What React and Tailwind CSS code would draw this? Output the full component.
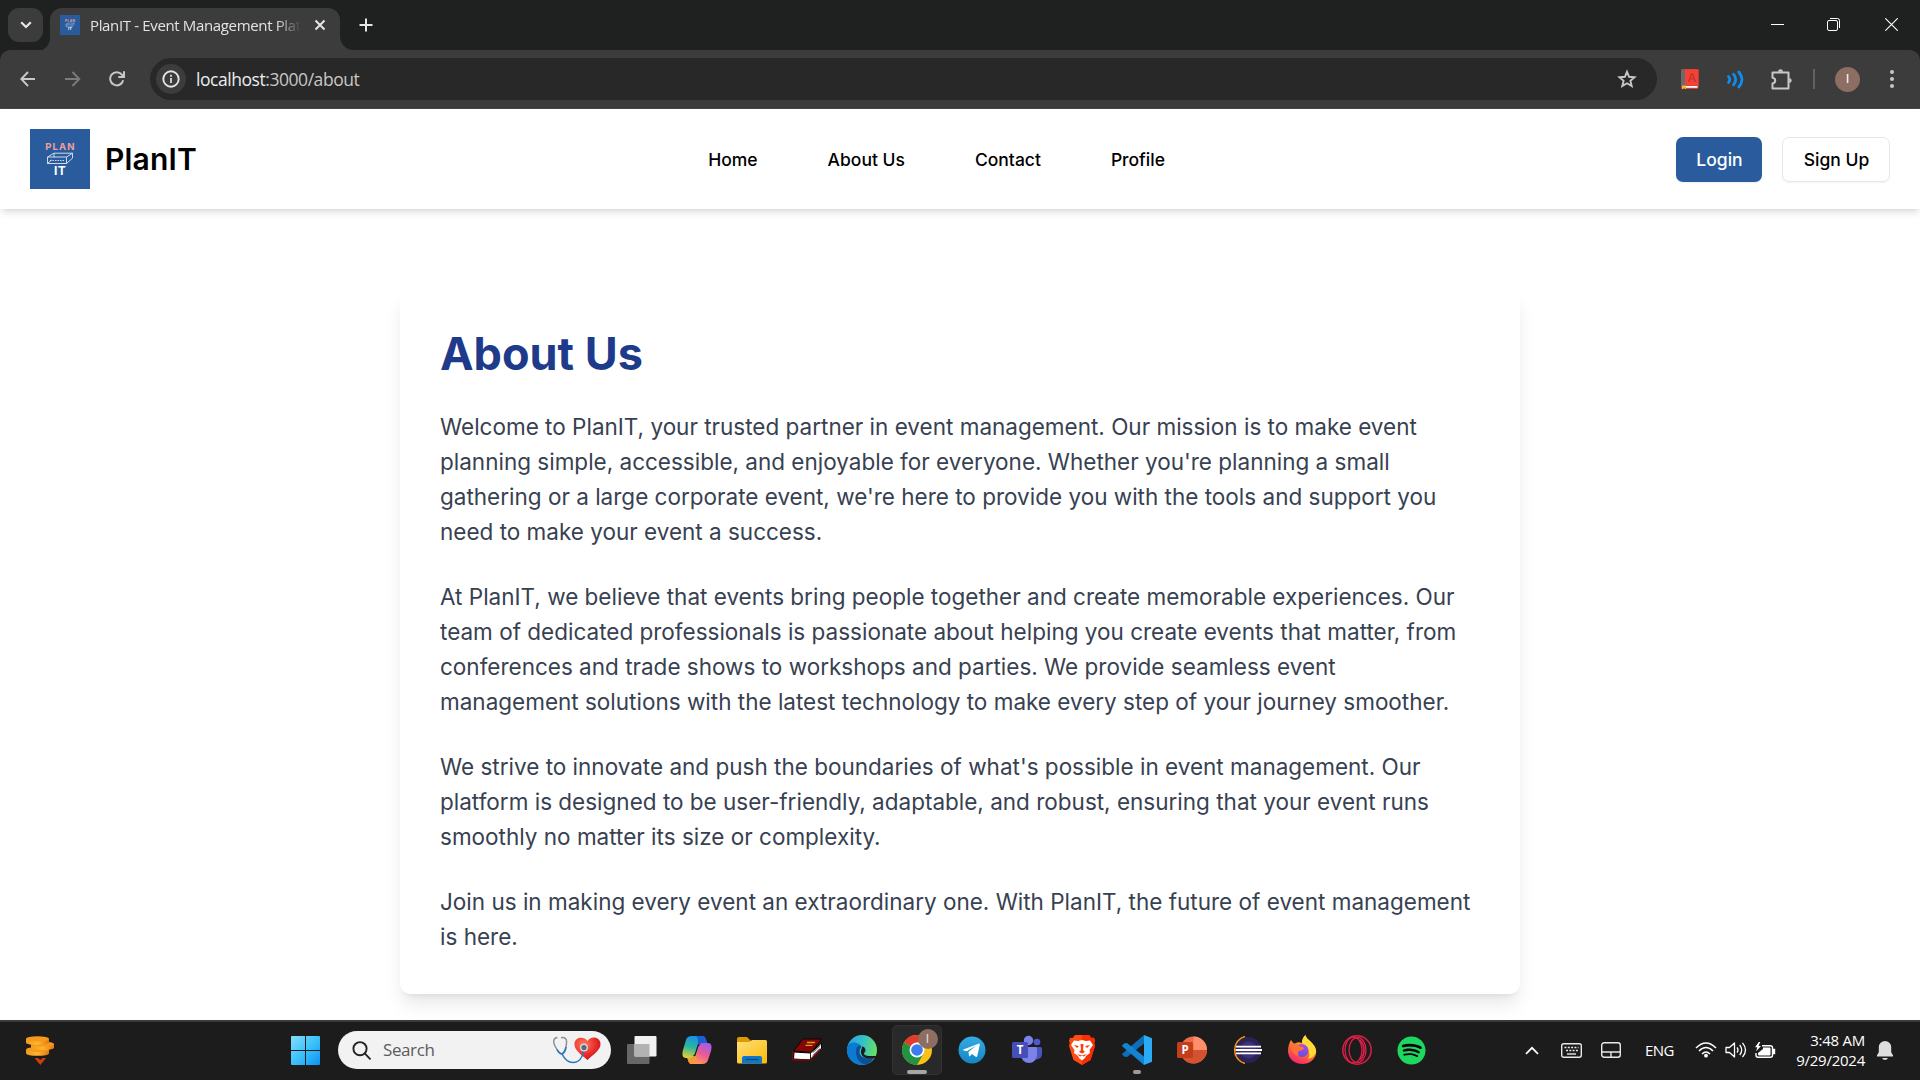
import React from "react";
import { FaSpotify } from "react-icons/fa";

const paragraphs = [
  [
    "Welcome to PlanIT, your trusted partner in event management. Our mission is to make event",
    "planning simple, accessible, and enjoyable for everyone. Whether you're planning a small",
    "gathering or a large corporate event, we're here to provide you with the tools and support you",
    "need to make your event a success.",
  ],
  [
    "At PlanIT, we believe that events bring people together and create memorable experiences. Our",
    "team of dedicated professionals is passionate about helping you create events that matter, from",
    "conferences and trade shows to workshops and parties. We provide seamless event",
    "management solutions with the latest technology to make every step of your journey smoother.",
  ],
  [
    "We strive to innovate and push the boundaries of what's possible in event management. Our",
    "platform is designed to be user-friendly, adaptable, and robust, ensuring that your event runs",
    "smoothly no matter its size or complexity.",
  ],
  [
    "Join us in making every event an extraordinary one. With PlanIT, the future of event management",
    "is here.",
  ],
];

/* The PlanIT mark: word, wireframe beam, word, on a blue square */
function PlanLogo({ className }) {
  return (
    <svg viewBox="0 0 60 60" className={className}>
      <rect width="60" height="60" fill="#2a5c9d" />
      <text x="30.4" y="21.4" textAnchor="middle" fontFamily="Inter, sans-serif" fontWeight="700" fontSize="9.5" letterSpacing="1.1" fill="#f0a09c">PLAN</text>
      <g fill="none" stroke="#dfe8f5" strokeWidth="0.9" strokeLinejoin="round">
        <path d="M17.500 28h19v6.500h-19zM17.500 28l6.500-3.800h18.500l-6 3.800M42.500 24.200v5l-6 5.300M24 24.200v4M17.500 34.500l4-3.500" />
        <path d="M20 31.500h14" strokeDasharray="1.500 1" />
      </g>
      <text x="30.200" y="45.600" textAnchor="middle" fontFamily="Inter, sans-serif" fontWeight="700" fontSize="12" letterSpacing="0.600" fill="#ffffff">IT</text>
    </svg>
  );
}

function TabStrip() {
  return (
    <div className="flex h-[50px] bg-[#1f2120] text-[#e3e3e3]">
      <div className="flex h-[50px] w-[43px] shrink-0 pl-2 pt-2">
        <div className="flex h-[34px] w-[35px] items-center justify-center rounded-[11px] bg-[#3c3c3c]">
          <svg viewBox="0 0 12 8" className="h-[8px] w-[12px]" fill="none" stroke="#e6e6e6" strokeWidth="2.200">
            <path d="M1.200 1.200L6 6l4.800-4.800" />
          </svg>
        </div>
      </div>
      <svg viewBox="0 0 7 12" className="h-[12px] w-[7px] shrink-0 self-end" fill="#3c3c3c" preserveAspectRatio="none">
        <path d="M7 0Q6 12-5 12H7z" />
      </svg>
      <div className="mt-[8px] flex h-[42px] w-[290px] shrink-0 items-center rounded-t-[12px] bg-[#3c3c3c] pb-[8px]">
        <PlanLogo className="ml-[10px] h-[20px] w-[20px] shrink-0" />
        <div className="ml-[10px] w-[211px] whitespace-nowrap [mask-image:linear-gradient(to_right,black_88%,transparent_100%)]">
          <span className="font-['Open_Sans',sans-serif] text-[15px] leading-[20px] tracking-[-0.35px]">PlanIT - Event Management Plat</span>
        </div>
        <svg viewBox="0 0 12 12" className="ml-[13px] h-[12px] w-[12px]" fill="none" stroke="#e6e6e6" strokeWidth="2">
          <path d="M1.500 1.500l9 9M10.500 1.500l-9 9" />
        </svg>
      </div>
      <svg viewBox="0 0 14 14" className="h-[14px] w-[14px] shrink-0 self-end" fill="#3c3c3c">
        <path d="M0 0v14h14C6 14 0 8 0 0z" />
      </svg>
      <svg viewBox="0 0 14 14" className="ml-[5px] mt-[18px] h-[14px] w-[14px]" fill="none" stroke="#e6e6e6" strokeWidth="2">
        <path d="M7 0.500v13M0.500 7h13" />
      </svg>
      <div className="flex-1" />
      <div className="mr-[22px] flex items-start gap-[43px] pt-[18px]">
        <svg viewBox="0 0 13 13" className="h-[13px] w-[13px]" stroke="#ffffff" strokeWidth="1">
          <path d="M0 6.500h13" />
        </svg>
        <svg viewBox="0 0 13 13" className="mr-[2px] h-[13px] w-[13px]" fill="none" stroke="#ffffff" strokeWidth="1">
          <rect x="0.500" y="2.500" width="10" height="10" rx="1.500" />
          <path d="M3 0.500h7.500a2 2 0 012 2V10" />
        </svg>
        <svg viewBox="0 0 13 13" className="h-[13px] w-[13px]" fill="none" stroke="#ffffff" strokeWidth="1.100">
          <path d="M0.300 0.300l12.400 12.400M12.700 0.300L0.300 12.700" />
        </svg>
      </div>
    </div>
  );
}

function AddressBar() {
  return (
    <div className="bg-[#1f2120]">
      <div className="flex h-[59px] items-center rounded-t-[10px] border-b border-[#474747] bg-[#3c3c3c]">
        <svg viewBox="0 0 16 16" className="ml-[20px] h-[16px] w-[16px]" fill="none" stroke="#c7c7c7" strokeWidth="1.900">
          <path d="M15 8H1.500M8 1L1.300 8 8 15" />
        </svg>
        <svg viewBox="0 0 16 16" className="ml-[29px] h-[16px] w-[16px]" fill="none" stroke="#7b7b7b" strokeWidth="1.900">
          <path d="M0 8h13.500M7.500 1l6.800 7-6.800 7" />
        </svg>
        <svg viewBox="0 0 16 16" className="ml-[28px] mr-[1px] h-[16px] w-[16px]" fill="none" stroke="#c7c7c7" strokeWidth="2">
          <path d="M14.200 9.300A6.600 6.600 0 1 1 12.900 3.600L14.500 5.500M15 0.300V6H9.300" />
        </svg>
        <div className="ml-[24px] flex h-[42px] w-[1507px] items-center rounded-full bg-[#282828]">
          <div className="ml-[6px] flex h-[30px] w-[30px] items-center justify-center rounded-full bg-[#3c3c3c]">
            <svg viewBox="0 0 18 18" className="h-[18px] w-[18px]" fill="none" stroke="#e3e3e3" strokeWidth="1.900">
              <circle cx="9" cy="9" r="7.700" />
              <path d="M9 8v5M9 4.800v2" strokeWidth="1.700" />
            </svg>
          </div>
          <span className="ml-[10px] whitespace-nowrap font-['Open_Sans',sans-serif] text-[17.5px] leading-[24px] tracking-[-0.45px] text-[#c7c7c7]">
            <span className="text-[#ededed]">localhost</span>:3000/about
          </span>
          <svg viewBox="0 0 20 20" className="ml-auto mr-[20px] h-[20px] w-[20px]" fill="none" stroke="#c7c7c7" strokeWidth="1.900">
            <path d="M10 2.800l2.100 5 5.400.5-4.100 3.500 1.300 5.300L10 14.300l-4.700 2.800 1.300-5.300L2.500 8.300l5.400-.5z" />
          </svg>
        </div>
        <svg viewBox="0 0 18 21" className="ml-[24px] h-[21px] w-[18px] shrink-0">
          <rect x="0" y="0" width="17.500" height="20" rx="1.500" fill="#d93a31" />
          <rect x="4" y="0.500" width="13.500" height="16" fill="#f44336" />
          <rect x="0" y="0.500" width="4" height="17" rx="1" fill="#6b6b6b" />
          <text x="10.800" y="12.600" textAnchor="middle" fontFamily="Liberation Sans, sans-serif" fontWeight="700" fontSize="12" fill="#c9332b">A</text>
          <rect x="3.500" y="17" width="13" height="1.800" fill="#fafafa" />
          <path d="M1 16.500h4v4l-2-1.500-2 1.500z" fill="#f0b93a" />
        </svg>
        <svg viewBox="0 0 17 19" className="ml-[28px] h-[19px] w-[17px] shrink-0" fill="none" stroke="#0d8ff2" strokeWidth="2.700" strokeLinecap="round">
          <path d="M1.500 6.500q2.500 3 0 6M6.500 4.200q4.400 5.300 0 10.600M11.800 2q6.400 7.500 0 15" />
        </svg>
        <svg viewBox="0 0 21 21" className="ml-[27px] h-[21px] w-[21px] shrink-0" fill="none" stroke="#c7c7c7" strokeWidth="2" strokeLinejoin="round">
          <path d="M1.500 3.500H17.500v16H1.500v-5c3.600-.5 3.600-5.300 0-5.800z" />
          <path d="M7 2.800a2.500 2.500 0 0 1 5 0zM18.200 9a2.500 2.500 0 0 1 0 5z" fill="#c7c7c7" stroke="none" />
        </svg>
        <div className="ml-[21px] h-[20px] w-[2px] bg-[#626262]" />
        <div className="ml-[20px] flex h-[25px] w-[25px] items-center justify-center rounded-full bg-[#8d6e63] font-['Liberation_Sans',sans-serif] text-[13px] text-white">I</div>
        <div className="ml-[30px] flex flex-col gap-[3px]">
          <div className="h-[4px] w-[4px] rounded-full bg-[#c7c7c7]" />
          <div className="h-[4px] w-[4px] rounded-full bg-[#c7c7c7]" />
          <div className="h-[4px] w-[4px] rounded-full bg-[#c7c7c7]" />
        </div>
      </div>
    </div>
  );
}

function SiteHeader() {
  return (
    <header className="flex h-[100px] shrink-0 items-center justify-between bg-white px-[30px] text-black shadow-[0_5px_7.5px_-1.25px_rgba(0,0,0,0.1),0_2.5px_5px_-2.5px_rgba(0,0,0,0.1)]">
      <div className="flex items-center gap-[15px]">
        <PlanLogo className="h-[60px] w-[60px]" />
        <span className="text-[30px] font-semibold leading-[40px] tracking-[0.2px]">PlanIT</span>
      </div>
      <nav className="flex items-center gap-[70px] text-[17.5px] font-medium leading-[25px]">
        <a>Home</a>
        <a>About Us</a>
        <a>Contact</a>
        <a>Profile</a>
      </nav>
      <div className="flex items-center gap-[20px] text-[17.5px] font-medium leading-[25px]">
        <button className="h-[45px] w-[86px] rounded-[7px] bg-[#2a5c9d] pl-px text-white shadow-[0_1px_2px_rgba(0,0,0,0.08)]">Login</button>
        <button className="h-[45px] w-[108px] rounded-[7px] border border-[#e2e8f0] bg-white pl-px shadow-[0_1px_2px_rgba(0,0,0,0.05)]">Sign Up</button>
      </div>
    </header>
  );
}

function AboutCard() {
  return (
    <main className="flex-1 pt-[80px]">
      <article className="mx-auto w-[1120px] rounded-[10px] bg-white p-[40px] shadow-[0_12.5px_18.75px_-3.75px_rgba(0,0,0,0.1),0_5px_7.5px_-5px_rgba(0,0,0,0.1)]">
        <h1 className="mb-[30px] text-[45px] font-bold leading-[50px] text-[#1e3a8a]">About Us</h1>
        <div className="flex flex-col gap-[30px] text-[22.5px] leading-[35px] text-[#374151]">
          {paragraphs.map((lines) => (
            <p key={lines[0]}>
              {lines.map((line) => (
                <span key={line} className="block whitespace-nowrap">{line}</span>
              ))}
            </p>
          ))}
        </div>
      </article>
    </main>
  );
}

const appIcons = {
  taskView: (
    <>
      <rect x="0" y="9" width="22.500" height="20" rx="1" fill="#676767" />
      <rect x="7.500" y="1" width="22" height="20.500" rx="1" fill="#f1f1f1" />
      <rect x="7.500" y="9" width="15" height="12.500" fill="#b2b2b2" />
    </>
  ),
  copilot: (
    <>
      <path d="M10 1h10c3 0 3.300 2 4 4l1 3h-4c-3 0-4 1-5 4l-2.500 8c-.7 2-1.500 3-4 3H4c-4 0-4-4-3-8l3-10c.8-2.500 2.500-4 6-4z" fill="url(#cpA)" />
      <path d="M20 29H10c-3 0-3.300-2-4-4l-.8-2h4.300c2.500 0 3.500-1 4-3l2.500-8c.7-2 1.500-4 4-4H26c4 0 4 4 3 8l-3 9c-.8 2.500-2.500 4-6 4z" fill="url(#cpB)" />
      <path d="M14 1h6c3 0 3.300 2 4 4l1 3h-4c-3 0-4 1-5 4l-.5 1.500C16 8 17 3 14 1z" fill="#1b5fd0" />
      <path d="M6.300 25.500L5.500 23h4c2.500 0 3.500-1 4-3l1.200-3.500C14 21 14.500 27 12 29h-2c-2.500 0-3-1.500-3.700-3.500z" fill="#f79a3c" />
      <path d="M15.800 9.500h3c-1.500.5-2.300 1.500-2.800 3l-2.700 8.500h-2.800c1.300-.5 2-1.500 2.500-3z" fill="#1c1c1c" />
    </>
  ),
  explorer: (
    <>
      <path d="M0 4a2 2 0 0 1 2-2h8l4 4v4H0z" fill="#dc9a00" />
      <path d="M0 7h12l3-2h13.500A1.500 1.500 0 0 1 30 6.500V27a1.500 1.500 0 0 1-1.500 1.500h-27A1.500 1.500 0 0 1 0 27z" fill="url(#fold)" />
      <path d="M5 28.500V23a2 2 0 0 1 2-2h16a2 2 0 0 1 2 2v5.500z" fill="#0f76c8" />
      <path d="M8.500 24.500h13" stroke="#064b86" strokeWidth="1.300" />
    </>
  ),
  book: (
    <>
      <path d="M11 4h18.500L19 17.500 1.500 16z" fill="#840606" stroke="#000" strokeWidth="0.800" />
      <path d="M2 17l16.500 1L29.500 8v5.500L18.500 25 1.500 24z" fill="#fff" stroke="#000" />
      <path d="M1.500 16C-.5 19 0 24 1.500 25H18L29 14" fill="none" stroke="#840606" strokeWidth="1.500" />
      <path d="M18.500 18v6.500M21 17.500l7-7M21 20.500l7-7" stroke="#222" strokeWidth="1" />
      <path d="M15 7.500h8M13.500 10.300h7" stroke="#d5a21b" strokeWidth="1.300" />
    </>
  ),
  edge: (
    <>
      <circle cx="15" cy="15" r="15" fill="url(#edgeA)" />
      <path d="M0 15C0 7 7 6 12 9c3 1.800 2 3.500 1 5-2 4 1 9 7 9 4 0 6-1 7.500-2C25 27 20 30 15 30 6 30 0 23 0 15z" fill="#0b7ad1" />
      <path d="M9.500 13C7.500 21 12 29.500 19 29.500c4-1 7-4.500 8.500-8.300-3 1.800-5 2-7.500 2-6 0-9-5-7-9.200.6-1.300 1.500-2.500.5-3.500-1.500 0-3 .8-4 2.500z" fill="#0d4f93" />
      <path d="M14.500 11.500c2.500 0 4 1.700 4 3.500 0 2-1.500 2.500-1.500 3.500 0 1.500 2 2.500 5 2.500h8l-2 2c-2 .3-3.500.3-6.500.3-6 0-9-5-7-9.300.5-1 .6-1.500 0-2.500z" fill="#1c1c1c" />
    </>
  ),
  chrome: (
    <>
      <circle cx="15" cy="15" r="15" fill="#fbc116" />
      <path d="M15 15L2 7.500A15 15 0 0 1 28 7.500H15z" fill="#e33b2e" />
      <path d="M2 7.500A15 15 0 0 0 15 30l6.500-11.300L15 15z" fill="#229342" />
      <circle cx="15" cy="15" r="7.500" fill="#fff" />
      <circle cx="15" cy="15" r="5.800" fill="#3b7cf0" />
    </>
  ),
  telegram: (
    <>
      <circle cx="15" cy="15" r="13.500" fill="url(#tg)" />
      <path d="M6.300 14.600L21.500 8.700c.9-.3 1.400.2 1.200 1.200L20.300 21c-.2.900-.8 1.100-1.600.7l-3.700-2.800-2.200 2.300c-.4.300-.8.100-.8-.4l-.5-3.900 7.700-6.500-9.500 5.800-3.400-1c-.6-.2-.6-.4 0-.6z" fill="#fff" />
    </>
  ),
  teams: (
    <>
      <circle cx="25" cy="7" r="3.300" fill="#5059c9" />
      <path d="M20 12h8.500a1.500 1.500 0 0 1 1.500 1.500V19a5.500 5.500 0 0 1-10 3z" fill="#4b53bc" />
      <circle cx="16.500" cy="5.500" r="4.700" fill="#7b83eb" />
      <path d="M9 12h14.500a1.500 1.500 0 0 1 1.500 1.500V20a8 8 0 0 1-16 0z" fill="#7b83eb" />
      <rect x="0" y="7" width="16" height="16" rx="1.500" fill="#464eb8" />
      <text x="8" y="19" textAnchor="middle" fontFamily="Open Sans, sans-serif" fontWeight="700" fontSize="11.500" fill="#fff">T</text>
    </>
  ),
  brave: (
    <>
      <path d="M8 0h14l2.500 3 2.500-.3L28 6l-.8 2 .8 3-4.500 14L15 30 6.500 25 2 11l.8-3L2 6l1-3.300L5.500 3z" fill="#ff4a12" />
      <path d="M15 0h7l2.500 3 2.500-.3L28 6l-.8 2 .8 3-4.500 14L15 30z" fill="#fa2d06" />
      <path d="M7 5.500l4 .5 4-1 4 1 4-.500L26 10l-3.500 5 .5 3-4 3-1 2-3 2.500L12 23l-1-2-4-3 .5-3L4 10z" fill="#fff" />
      <path d="M7 10l5 1-2 2zM23 10l-5 1 2 2zM13.500 9h3L16 15l2 2-3 1.500L12 17l2-2zM10 19l5 1.500 5-1.500-3 2.500-2-.800-2 .8z" fill="#fb3e0c" />
    </>
  ),
  vscode: (
    <>
      <path d="M22 0v8.500L5 22 2.500 21.800.500 20a1 1 0 0 1 0-1.500z" fill="#0d6fb8" />
      <path d="M22 30v-8.500L5 8 2.500 8.200.500 10a1 1 0 0 0 0 1.500z" fill="#1284d3" />
      <path d="M22 0l8 3.200v23.600L22 30z" fill="#2aabf3" />
    </>
  ),
  powerpoint: (
    <>
      <circle cx="16.500" cy="15" r="13.500" fill="#ed6c47" />
      <path d="M16.500 1.500A13.500 13.500 0 0 1 30 15H16.500z" fill="#ff8f6b" />
      <path d="M3 15a13.500 13.500 0 0 0 27 0z" fill="#d35230" />
      <rect x="0" y="7" width="16" height="16" rx="1.500" fill="#c43e1c" />
      <text x="8" y="19" textAnchor="middle" fontFamily="Open Sans, sans-serif" fontWeight="700" fontSize="11.500" fill="#fff">P</text>
    </>
  ),
  eclipse: (
    <>
      <path d="M13 1.500A14 14 0 0 0 13 28.500" fill="none" stroke="#f7941e" strokeWidth="1.700" />
      <circle cx="16.500" cy="15" r="13" fill="#2c2255" />
      <circle cx="16.500" cy="15" r="8.500" fill="#3c3173" />
      <path d="M4 11.700h25M3.500 15h26.500M4 18.300h25" stroke="#fff" strokeWidth="1.800" />
    </>
  ),
  firefox: (
    <>
      <path d="M4 5l3 4c3-2 6-2 8-1 0-3 1-6 3.500-8 .5 3 3 4.500 5 6.500C28 11 30 14 29 19c-1.500 6-7 10-13.500 10C7 29 1 23 1 16 1 12 2 8 4 5z" fill="url(#ffA)" />
      <path d="M18.500 0c.5 3 3 4.500 5 6.500C27 10 29 13 29 17c-2 5-5 6-8 7 3-5 1-11-6-16 0-3 1-6 3.500-8z" fill="#ffdc35" />
      <circle cx="15" cy="15.500" r="6.500" fill="url(#ffB)" />
      <path d="M3 10c4-3 7-1 9 1 2 1 5 1 5 2 0 2-3 2-5 3-2 1.500-1 4 0 5-5-1-7-5-9-11z" fill="#ff7139" />
    </>
  ),
  opera: (
    <g fill="none" stroke="#d91f48">
      <circle cx="15" cy="15" r="14.200" strokeWidth="1.500" />
      <ellipse cx="11.500" cy="15" rx="8.500" ry="13" strokeWidth="1.300" />
      <ellipse cx="15.500" cy="15" rx="8.500" ry="12.500" strokeWidth="1.300" />
      <path d="M17.500 5c6 4.500 6 15.500 0 20" strokeWidth="1.800" />
    </g>
  ),
};

function AppIcon({ name }) {
  return (
    <svg viewBox="0 0 30 30" className="h-[30px] w-[30px]">{appIcons[name]}</svg>
  );
}

function GradientDefs() {
  return (
    <svg className="absolute h-0 w-0">
      <defs>
        <linearGradient id="cpA" x1="0.500" y1="0" x2="0.200" y2="1"><stop offset="0" stopColor="#1a8fe8" /><stop offset="0.500" stopColor="#28b6a0" /><stop offset="1" stopColor="#e8d130" /></linearGradient>
        <linearGradient id="cpB" x1="0.800" y1="0" x2="0.300" y2="1"><stop offset="0" stopColor="#a05cf0" /><stop offset="0.500" stopColor="#ec5a92" /><stop offset="1" stopColor="#ffa34d" /></linearGradient>
        <linearGradient id="fold" x1="0" y1="0" x2="1" y2="1"><stop offset="0" stopColor="#ffe079" /><stop offset="1" stopColor="#fbb908" /></linearGradient>
        <linearGradient id="edgeA" x1="0" y1="0.300" x2="1" y2="0.500"><stop offset="0" stopColor="#2aa4dd" /><stop offset="0.500" stopColor="#34c1c9" /><stop offset="1" stopColor="#68e35b" /></linearGradient>
        <linearGradient id="tg" x1="0" y1="0" x2="0" y2="1"><stop offset="0" stopColor="#35abe2" /><stop offset="1" stopColor="#1286c4" /></linearGradient>
        <linearGradient id="ffA" x1="0.800" y1="0" x2="0.300" y2="1"><stop offset="0" stopColor="#ffd52e" /><stop offset="0.500" stopColor="#ff7b2b" /><stop offset="1" stopColor="#f5216e" /></linearGradient>
        <linearGradient id="ffB" x1="0" y1="0" x2="0" y2="1"><stop offset="0" stopColor="#b04fe0" /><stop offset="1" stopColor="#6450dc" /></linearGradient>
        <linearGradient id="win" gradientUnits="userSpaceOnUse" x1="0" y1="0" x2="29" y2="29"><stop offset="0" stopColor="#86dcfa" /><stop offset="0.500" stopColor="#3dc2fa" /><stop offset="1" stopColor="#0a92f5" /></linearGradient>
        <linearGradient id="coin" x1="0" y1="0" x2="1" y2="0"><stop offset="0" stopColor="#f39a17" /><stop offset="0.500" stopColor="#ffb62f" /><stop offset="1" stopColor="#e67a0b" /></linearGradient>
        <radialGradient id="heart" cx="0.350" cy="0.300" r="0.800"><stop offset="0" stopColor="#ff7b5e" /><stop offset="0.600" stopColor="#e92c2a" /><stop offset="1" stopColor="#b81018" /></radialGradient>
      </defs>
    </svg>
  );
}

function CoinsIcon() {
  return (
    <svg viewBox="0 0 29 29" className="ml-[26px] h-[29px] w-[29px] shrink-0">
      <path d="M0 13.500v3.700c0 3.500 23 3.500 23 0v-3.700z" fill="url(#coin)" />
      <ellipse cx="11.500" cy="13.500" rx="11.500" ry="2.600" fill="#f59a1c" />
      <path d="M5 8v3.700c0 3 23 3 23 0V8z" fill="url(#coin)" />
      <ellipse cx="16.500" cy="8" rx="11.500" ry="2.600" fill="#f59a1c" />
      <path d="M0 2.800v4c0 3 23 3 23 0v-4z" fill="url(#coin)" />
      <ellipse cx="11.500" cy="2.800" rx="11.500" ry="2.600" fill="#f59a1c" />
      <path d="M8.500 22h3.500l2.300 2 2.200-2H20l-5.700 7z" fill="#c93f12" />
    </svg>
  );
}

function SearchBox() {
  return (
    <div className="ml-[18px] flex h-[38px] w-[273px] shrink-0 items-center rounded-full bg-[#f2f2f2]">
      <svg viewBox="0 0 19 19" className="ml-[14px] h-[19px] w-[19px]" fill="none" stroke="#222" strokeWidth="1.900">
        <circle cx="8" cy="7.700" r="6.600" />
        <path d="M12.700 12.400l5.300 5.400" strokeLinecap="round" />
      </svg>
      <span className="ml-[12px] font-['Open_Sans',sans-serif] text-[17px] leading-[24px] tracking-[-0.4px] text-[#5c5c5c]">Search</span>
      <svg viewBox="0 0 48 28" className="ml-auto mr-[10px] h-[28px] w-[48px]" fill="none">
        <path d="M34.500 24C26 17 21 13 21.500 7.500 22 1 31 0 34.500 5c4-6 13-4 13 3C47.500 14 41 18 34.500 24z" fill="url(#heart)" />
        <path d="M4.500 1.500C0 2 0 6 2 10c1.500 3 3.500 7 7 8M8 1.800c4-.8 6 1.200 5.500 5.200-.2 4-1 8.500-4.500 11" stroke="#8b9199" strokeWidth="1.500" />
        <path d="M4 13.500C5.500 16.500 7 18 9 18c2.500-1 3.500-4 4-7M9 18c2 4 6 8.500 11 8.500 8 0 10-7 11-14" stroke="#2877bd" strokeWidth="1.600" />
        <circle cx="31" cy="11.500" r="3.300" fill="#5d6770" stroke="#cfd5da" strokeWidth="1.500" />
      </svg>
    </div>
  );
}

function Slot({ children }) {
  return <div className="flex h-[50px] w-[55px] shrink-0 items-center justify-center">{children}</div>;
}

function SystemTray() {
  return (
    <div className="ml-auto flex items-center font-['Open_Sans',sans-serif] text-white">
      <svg viewBox="0 0 14 9" className="h-[9px] w-[14px]" fill="none" stroke="#fff" strokeWidth="1.700">
        <path d="M1 7.800l6-6 6 6" />
      </svg>
      <svg viewBox="0 0 21 15" className="ml-[22px] h-[15px] w-[21px]" fill="none" stroke="#e8e8e8" strokeWidth="1.400">
        <rect x="0.700" y="0.700" width="19.600" height="13.600" rx="2" />
        <path d="M3.500 4.500h14M5 7.500h12" strokeDasharray="2 1.300" strokeWidth="1.600" />
        <path d="M6 11h9" />
      </svg>
      <svg viewBox="0 0 20 16" className="ml-[19px] h-[16px] w-[20px]" fill="none" stroke="#e8e8e8" strokeWidth="1.400">
        <rect x="0.700" y="0.700" width="18.600" height="14.600" rx="2.500" />
        <path d="M1 10h18M10 10v5" />
      </svg>
      <span className="ml-[24px] w-[30px] whitespace-nowrap text-[15px] leading-[20px] tracking-[-0.6px]">ENG</span>
      <svg viewBox="0 0 22 16" className="ml-[20px] h-[16px] w-[22px]" fill="none" stroke="#fff" strokeWidth="1.500">
        <path d="M1 6q10-10 20 0M4 9q7-7 14 0M7 12q4-4 8 0" />
        <circle cx="11" cy="13.700" r="1.900" fill="#fff" stroke="none" />
      </svg>
      <svg viewBox="0 0 22 18" className="ml-[8px] h-[18px] w-[22px]" fill="none" stroke="#fff" strokeWidth="1.300" strokeLinejoin="round">
        <path d="M1 6.500h3.500L9.500 2v14l-5-4.500H1z" />
        <path d="M12 6.500q2 2.500 0 5M14.700 4q4 5 0 10M17.500 1.800q6 7.200 0 14.400" />
      </svg>
      <svg viewBox="0 0 22 17" className="ml-[7px] h-[17px] w-[22px]" fill="none" stroke="#fff" strokeWidth="1.400">
        <path d="M8 3.700h8.500a2 2 0 0 1 2 2v7.600a2 2 0 0 1-2 2H4a2 2 0 0 1-2-2V11" />
        <path d="M9 5.500h6.500a1 1 0 0 1 1 1v6a1 1 0 0 1-1 1H5a1 1 0 0 1-1-1V11l5-4z" fill="#fff" stroke="none" />
        <path d="M19.500 7.500h1v4h-1z" fill="#fff" />
        <path d="M4.800 0L1 5.300h2.300L2.200 9.300 7 4H4.500L6.300 0z" fill="#fff" stroke="none" />
      </svg>
      <div className="ml-[9px] w-[80px] whitespace-nowrap text-right text-[15px] leading-[20px] tracking-[-0.25px]">
        <div>3:48 AM</div>
        <div>9/29/2024</div>
      </div>
      <svg viewBox="0 0 16 19" className="ml-[12px] mr-[27px] h-[19px] w-[16px]" fill="#dedede">
        <path d="M8 0a6.200 6.200 0 0 1 6.200 6.200v5L16 14.300v1.200H0v-1.200l1.800-3.100v-5A6.200 6.200 0 0 1 8 0zM5 17h6q-1 2-3 2t-3-2z" />
      </svg>
    </div>
  );
}

function Taskbar() {
  return (
    <div className="flex h-[60px] shrink-0 items-center border-t-2 border-[#3b3b3b] bg-[#1c1c1c] pb-[2px]">
      <GradientDefs />
      <CoinsIcon />
      <svg viewBox="0 0 29 29" className="ml-[236px] h-[29px] w-[29px] shrink-0" fill="url(#win)">
        <path d="M1 0h13v14H0V1a1 1 0 0 1 1-1zM15 0h13a1 1 0 0 1 1 1v13H15zM0 15h14v14H1a1 1 0 0 1-1-1zM15 15h14v13a1 1 0 0 1-1 1H15z" />
      </svg>
      <SearchBox />
      <div className="ml-[3px] flex items-center">
        <Slot><AppIcon name="taskView" /></Slot>
        <Slot><AppIcon name="copilot" /></Slot>
        <Slot><AppIcon name="explorer" /></Slot>
        <Slot><AppIcon name="book" /></Slot>
        <Slot><AppIcon name="edge" /></Slot>
        <Slot>
          <div className="relative flex h-[50px] w-[50px] items-center justify-center rounded-[5px] border border-[#323232] bg-[#292929]">
            <AppIcon name="chrome" />
            <div className="absolute right-[3px] top-[3px] flex h-[20px] w-[20px] items-center justify-center rounded-full bg-[#8d6e63] font-['Liberation_Sans',sans-serif] text-[12px] text-[#e8dcd8]">I</div>
            <div className="absolute bottom-0 left-[14px] h-[4px] w-[20px] rounded-full bg-[#a6a6a6]" />
          </div>
        </Slot>
        <Slot><AppIcon name="telegram" /></Slot>
        <Slot><AppIcon name="teams" /></Slot>
        <Slot><AppIcon name="brave" /></Slot>
        <Slot>
          <div className="relative flex h-[50px] w-[50px] items-center justify-center">
            <AppIcon name="vscode" />
            <div className="absolute bottom-[1px] left-[21px] h-[4px] w-[8px] rounded-full bg-[#9c9c9c]" />
          </div>
        </Slot>
        <Slot><AppIcon name="powerpoint" /></Slot>
        <Slot><AppIcon name="eclipse" /></Slot>
        <Slot><AppIcon name="firefox" /></Slot>
        <Slot><AppIcon name="opera" /></Slot>
        <Slot>
          <div className="h-[29px] w-[29px] rounded-full bg-[radial-gradient(#000_60%,transparent_62%)]">
            <FaSpotify className="h-[29px] w-[29px] text-[#1ed760]" />
          </div>
        </Slot>
      </div>
      <SystemTray />
    </div>
  );
}

export default function App() {
  return (
    <div className="flex h-[1080px] w-[1920px] flex-col overflow-hidden bg-white font-['Inter',sans-serif]">
      <TabStrip />
      <AddressBar />
      <SiteHeader />
      <AboutCard />
      <Taskbar />
    </div>
  );
}
